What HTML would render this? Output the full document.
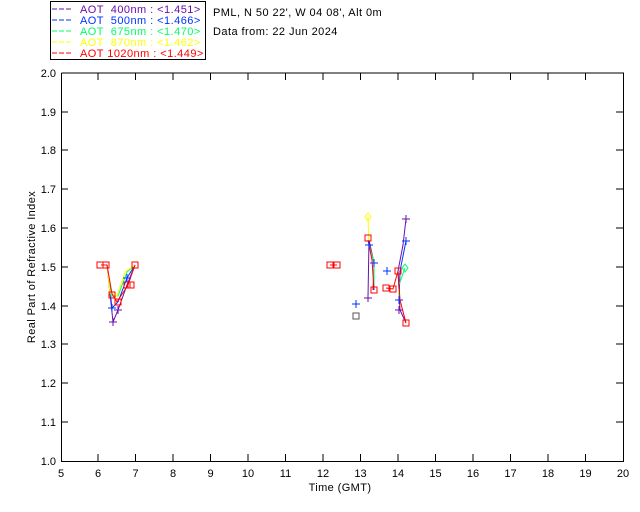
<!DOCTYPE html>
<html><head><style>
body{margin:0;background:#fff;width:640px;height:512px;overflow:hidden}
svg{display:block}
text{font-family:"Liberation Sans",sans-serif;font-size:11px}
</style></head><body>
<svg width="640" height="512" viewBox="0 0 640 512" xmlns="http://www.w3.org/2000/svg">
<rect x="50.5" y="1.5" width="155" height="58" fill="none" stroke="#000"/>
<g stroke-width="1" stroke-dasharray="5,2">
<line x1="52" y1="9" x2="72" y2="9" stroke="#6a0dad"/>
<line x1="52" y1="20" x2="72" y2="20" stroke="#0033ff"/>
<line x1="52" y1="31" x2="72" y2="31" stroke="#00ff66"/>
<line x1="52" y1="42" x2="72" y2="42" stroke="#ffff00"/>
<line x1="52" y1="53" x2="72" y2="53" stroke="#ff0000"/>
</g>
<g letter-spacing="0.45">
<text x="80" y="13" fill="#6a0dad" xml:space="preserve">AOT  400nm : &lt;1.451&gt;</text>
<text x="80" y="24" fill="#0033ff" xml:space="preserve">AOT  500nm : &lt;1.466&gt;</text>
<text x="80" y="35" fill="#00ff66" xml:space="preserve">AOT  675nm : &lt;1.470&gt;</text>
<text x="80" y="46" fill="#ffff00" xml:space="preserve">AOT  870nm : &lt;1.462&gt;</text>
<text x="80" y="57" fill="#ff0000" xml:space="preserve">AOT 1020nm : &lt;1.449&gt;</text>
<text x="213" y="16">PML, N 50 22', W 04 08', Alt 0m</text>
<text x="213" y="35">Data from: 22 Jun 2024</text>
</g>
<g stroke="#000" fill="none">
<path d="M61.5 73V461.5H623.5V73H61.5"/>
<path d="M98 461v-7M135.5 461v-7M173 461v-7M210.5 461v-7M248 461v-7M285.5 461v-7M323 461v-7M360.5 461v-7M398 461v-7M435.5 461v-7M473 461v-7M510.5 461v-7M548 461v-7M585.5 461v-7
M98 73v7M135.5 73v7M173 73v7M210.5 73v7M248 73v7M285.5 73v7M323 73v7M360.5 73v7M398 73v7M435.5 73v7M473 73v7M510.5 73v7M548 73v7M585.5 73v7
M61 422h7M61 383h7M61 344h7M61 306h7M61 267h7M61 228h7M61 189h7M61 150h7M61 112h7
M623 422h-7M623 383h-7M623 344h-7M623 306h-7M623 267h-7M623 228h-7M623 189h-7M623 150h-7M623 112h-7"/>
</g>
<g font-size="10" text-anchor="end">
<text x="56" y="465">1.0</text><text x="56" y="426">1.1</text><text x="56" y="387">1.2</text><text x="56" y="348">1.3</text><text x="56" y="310">1.4</text><text x="56" y="271">1.5</text><text x="56" y="232">1.6</text><text x="56" y="193">1.7</text><text x="56" y="154">1.8</text><text x="56" y="116">1.9</text><text x="56" y="77">2.0</text>
</g>
<g text-anchor="middle">
<text x="61" y="477">5</text><text x="98" y="477">6</text><text x="135.5" y="477">7</text><text x="173" y="477">8</text><text x="210.5" y="477">9</text><text x="248" y="477">10</text><text x="285.5" y="477">11</text><text x="323" y="477">12</text><text x="360.5" y="477">13</text><text x="398" y="477">14</text><text x="435.5" y="477">15</text><text x="473" y="477">16</text><text x="510.5" y="477">17</text><text x="548" y="477">18</text><text x="585.5" y="477">19</text><text x="623" y="477">20</text>
<text x="340" y="491" letter-spacing="0.4">Time (GMT)</text>
</g>
<text transform="translate(35 267) rotate(-90)" text-anchor="middle" letter-spacing="0.4">Real Part of Refractive Index</text>
<g fill="none">
<path d="M101 265L107 265L113 322L118 310L127 285L135 265" stroke="#6a0dad"/>
<path d="M101 265L107 265L112 308L118 302L127 278L135 265" stroke="#0033ff"/>
<path d="M101 265L107 265L111 296L118 296L127 272L135 265" stroke="#00ff66"/>
<path d="M101 265L107 265L110 293L117 296L125 272L135 265" stroke="#ffff00"/>
<path d="M101 265L107 265L112 294L117 302L128 285L135 265" stroke="#ff0000"/>
<g stroke="#ff0000">
<rect x="97" y="262" width="6" height="6"/><rect x="103" y="262" width="6" height="6"/><rect x="132" y="262" width="6" height="6"/>
<rect x="109" y="292" width="6" height="6"/><rect x="115" y="299" width="6" height="6"/><rect x="124" y="282" width="6" height="6"/><rect x="128" y="282" width="6" height="6"/>
</g>
<g stroke="#6a0dad"><path d="M113 318v8M109 322h8M118 306v8M114 310h8"/></g>
<g stroke="#0033ff"><path d="M112 304v8M108 308h8M127 274v8M123 278h8"/></g>
</g>
<g fill="none">
<path d="M330 265H337" stroke="#ff0000"/>
<path d="M368 298L369 240L374 263L373 290" stroke="#6a0dad"/>
<path d="M368 217L369 245L374 263L374 290" stroke="#ffff00"/>
<path d="M369 245L374 263L374 290" stroke="#00ff66"/>
<path d="M368 240L372 260L374 290" stroke="#ff0000"/>
<path d="M406 219L403 245L398 271L400 310L406 323" stroke="#6a0dad"/>
<path d="M406 241L400 271L399 303" stroke="#0033ff"/>
<path d="M405 268L399 285L399 300" stroke="#00ff66"/>
<path d="M386 288L393 289L398 271L400 300L406 323" stroke="#ff0000"/>
<g stroke="#ff0000">
<rect x="327" y="262" width="6" height="6"/><rect x="334" y="262" width="6" height="6"/>
<rect x="365" y="235" width="6" height="6"/><rect x="371" y="287" width="6" height="6"/><rect x="383" y="285" width="6" height="6"/><rect x="390" y="286" width="6" height="6"/><rect x="395" y="268" width="6" height="6"/><rect x="403" y="320" width="6" height="6"/>
</g>
<rect x="353" y="313" width="6" height="6" stroke="#555"/>
<g stroke="#6a0dad"><path d="M368 294v8M364 298h8M406 215v8M402 219h8M399 306v8M395 310h8"/></g>
<g stroke="#0033ff"><path d="M369 241v8M365 245h8M374 259v8M370 263h8M406 237v8M402 241h8M387 267v8M383 271h8M399 296v8M395 300h8M356 300v8M352 304h8"/></g>
<path d="M368 213l3 4-3 4-3-4z" stroke="#ffff00"/>
<path d="M405 264l3 4-3 4-3-4z" stroke="#00ff66"/>
</g>
</svg>
</body></html>
